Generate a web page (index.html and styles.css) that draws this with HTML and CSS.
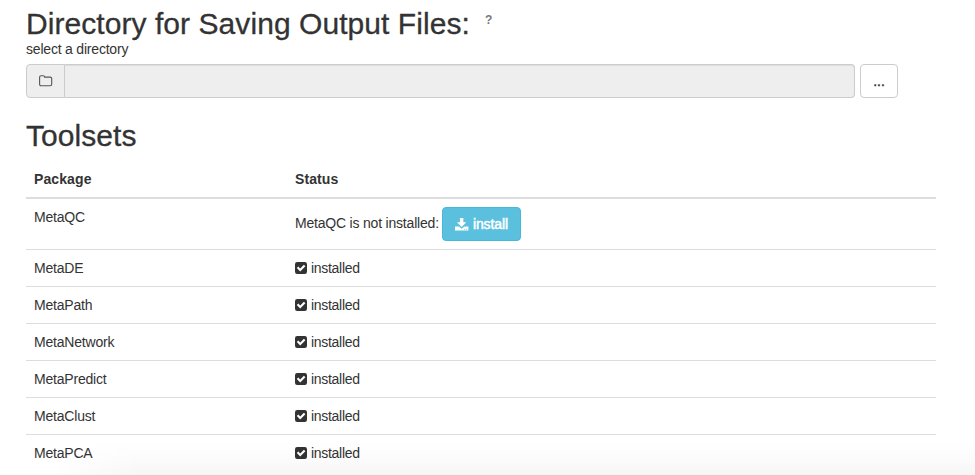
FILE: index.html
```
<!DOCTYPE html>
<html lang="en">
<head>
<meta charset="utf-8">
<title>Settings</title>
<link rel="stylesheet" href="styles.css">
</head>
<body>
<svg class="symbols" aria-hidden="true">
  <symbol id="check" viewBox="0 0 12 12"><path fill="#333" fill-rule="evenodd" d="M2.200 0h7.600A2.200 2.200 0 0 1 12 2.200v7.600A2.200 2.200 0 0 1 9.800 12H2.200A2.200 2.200 0 0 1 0 9.800V2.200A2.200 2.200 0 0 1 2.200 0zM5.200 9.400l5.200-5.200-1.500-1.500-3.700 3.700L3.300 4.500 1.800 6z"/></symbol>
</svg>
<main class="page">
  <h2 class="title"><span class="title-text">Directory for Saving Output Files:</span><span class="help">?</span></h2>
  <div class="hint">select a directory</div>
  <div class="picker">
    <span class="addon"><svg width="14" height="12" viewBox="0 0 14 12"><path d="M.6 9.200V2.200Q.6.700 2.100.700h2.200q1.200 0 1.300 1.400h5.600q1.500 0 1.500 1.500v5.600q0 1.500-1.500 1.500H2.100Q.6 10.700.6 9.200z" fill="none" stroke="#555" stroke-width="1.1"/></svg></span>
    <span class="field"></span>
    <button class="browse">...</button>
  </div>
  <h2 class="subtitle">Toolsets</h2>
  <table class="tools">
    <thead><tr><th class="pkg">Package</th><th>Status</th></tr></thead>
    <tbody>
      <tr><td>MetaQC</td><td class="action"><span class="missing">MetaQC is not installed:</span><button class="install"><svg width="14" height="13" viewBox="0 0 14 13"><path fill="#fff" fill-rule="evenodd" d="M5 0h3.400v4.300h2.900L6.700 9 2 4.300h3zM0 8.500h3.900l2.800 2.300 2.800-2.300h4V12.500H0zM9.200 11v.8h.9V11zM11.300 11v.8h.9V11z"/></svg><span>install</span></button></td></tr>
      <tr><td>MetaDE</td><td class="ok"><svg><use href="#check"/></svg><span>installed</span></td></tr>
      <tr><td>MetaPath</td><td class="ok"><svg><use href="#check"/></svg><span>installed</span></td></tr>
      <tr><td>MetaNetwork</td><td class="ok"><svg><use href="#check"/></svg><span>installed</span></td></tr>
      <tr><td>MetaPredict</td><td class="ok"><svg><use href="#check"/></svg><span>installed</span></td></tr>
      <tr><td>MetaClust</td><td class="ok"><svg><use href="#check"/></svg><span>installed</span></td></tr>
      <tr><td>MetaPCA</td><td class="ok"><svg><use href="#check"/></svg><span>installed</span></td></tr>
    </tbody>
  </table>
</main>
<div class="shade"></div>
</body>
</html>
```

FILE: styles.css
```
* { box-sizing: border-box; }
body {
  margin: 0;
  height: 475px;
  overflow: hidden;
  background: #fff;
  color: #333;
  font: 14px/20px "Liberation Sans", Arial, sans-serif;
  letter-spacing: -0.2px;
}
.symbols { display: none; }
.page { width: 910px; margin-left: 26px; padding-top: 7px; }
h2 {
  margin: 0;
  font-size: 30px;
  font-weight: 400;
  line-height: 33px;
}
.title { display: flex; height: 32px; }
.title-text { letter-spacing: 0.06px; -webkit-text-stroke: .3px #333; }
.help {
  margin: 3px 0 0 15px;
  color: #777;
  font-size: 12px;
  font-weight: 700;
  line-height: 20px;
}
.hint { height: 20px; }
.picker { display: flex; height: 34px; margin-top: 5px; }
.addon {
  display: flex;
  align-items: center;
  width: 39px;
  padding-left: 12px;
  background: #eee;
  border: 1px solid #ccc;
  border-radius: 4px 0 0 4px;
}
.field {
  width: 790px;
  background: #eee;
  border: 1px solid #ccc;
  border-left: 0;
  border-radius: 0 4px 4px 0;
  box-shadow: inset 0 1px 1px rgba(0, 0, 0, .075);
}
button { font: inherit; letter-spacing: inherit; border-radius: 4px; }
.browse {
  width: 38px;
  margin-left: 5px;
  padding: 0;
  color: #333;
  background: #fff;
  border: 1px solid #ccc;
  letter-spacing: 0;
  -webkit-text-stroke: .4px #333;
}
.subtitle { margin: 21px 0 9px; letter-spacing: 0.05px; -webkit-text-stroke: .3px #333; }
.tools { display: block; }
.tools thead, .tools tbody { display: block; }
.tools tr { display: grid; grid-template-columns: 261px 1fr; height: 37px; border-top: 1px solid #ddd; }
.tools th, .tools td { padding: 8px; text-align: left; }
.tools thead tr { height: 38px; border-top: 0; border-bottom: 2px solid #ddd; }
.tools th { letter-spacing: 0.1px; }
.tools tbody tr:first-child { height: 50px; border-top: 0; }
.tools .action { display: flex; }
.missing { width: 147px; padding-top: 6px; white-space: nowrap; }
.install {
  display: flex;
  align-items: center;
  gap: 4px;
  width: 79px;
  height: 34px;
  padding: 0 12px;
  color: #fff;
  background: #5bc0de;
  border: 1px solid #46b8da;
  letter-spacing: -0.1px;
  -webkit-text-stroke: .5px #fff;
}
.ok { display: flex; align-items: center; gap: 4px; letter-spacing: -0.3px; }
.ok svg { width: 12px; height: 12px; flex: none; }
.shade {
  position: absolute;
  left: 0;
  right: 0;
  bottom: 0;
  height: 36px;
  background: linear-gradient(rgba(0, 0, 0, 0), rgba(0, 0, 0, .01) 50%, rgba(0, 0, 0, .035));
  -webkit-mask-image: linear-gradient(90deg, transparent 50px, #000 140px);
  mask-image: linear-gradient(90deg, transparent 50px, #000 140px);
}
```
